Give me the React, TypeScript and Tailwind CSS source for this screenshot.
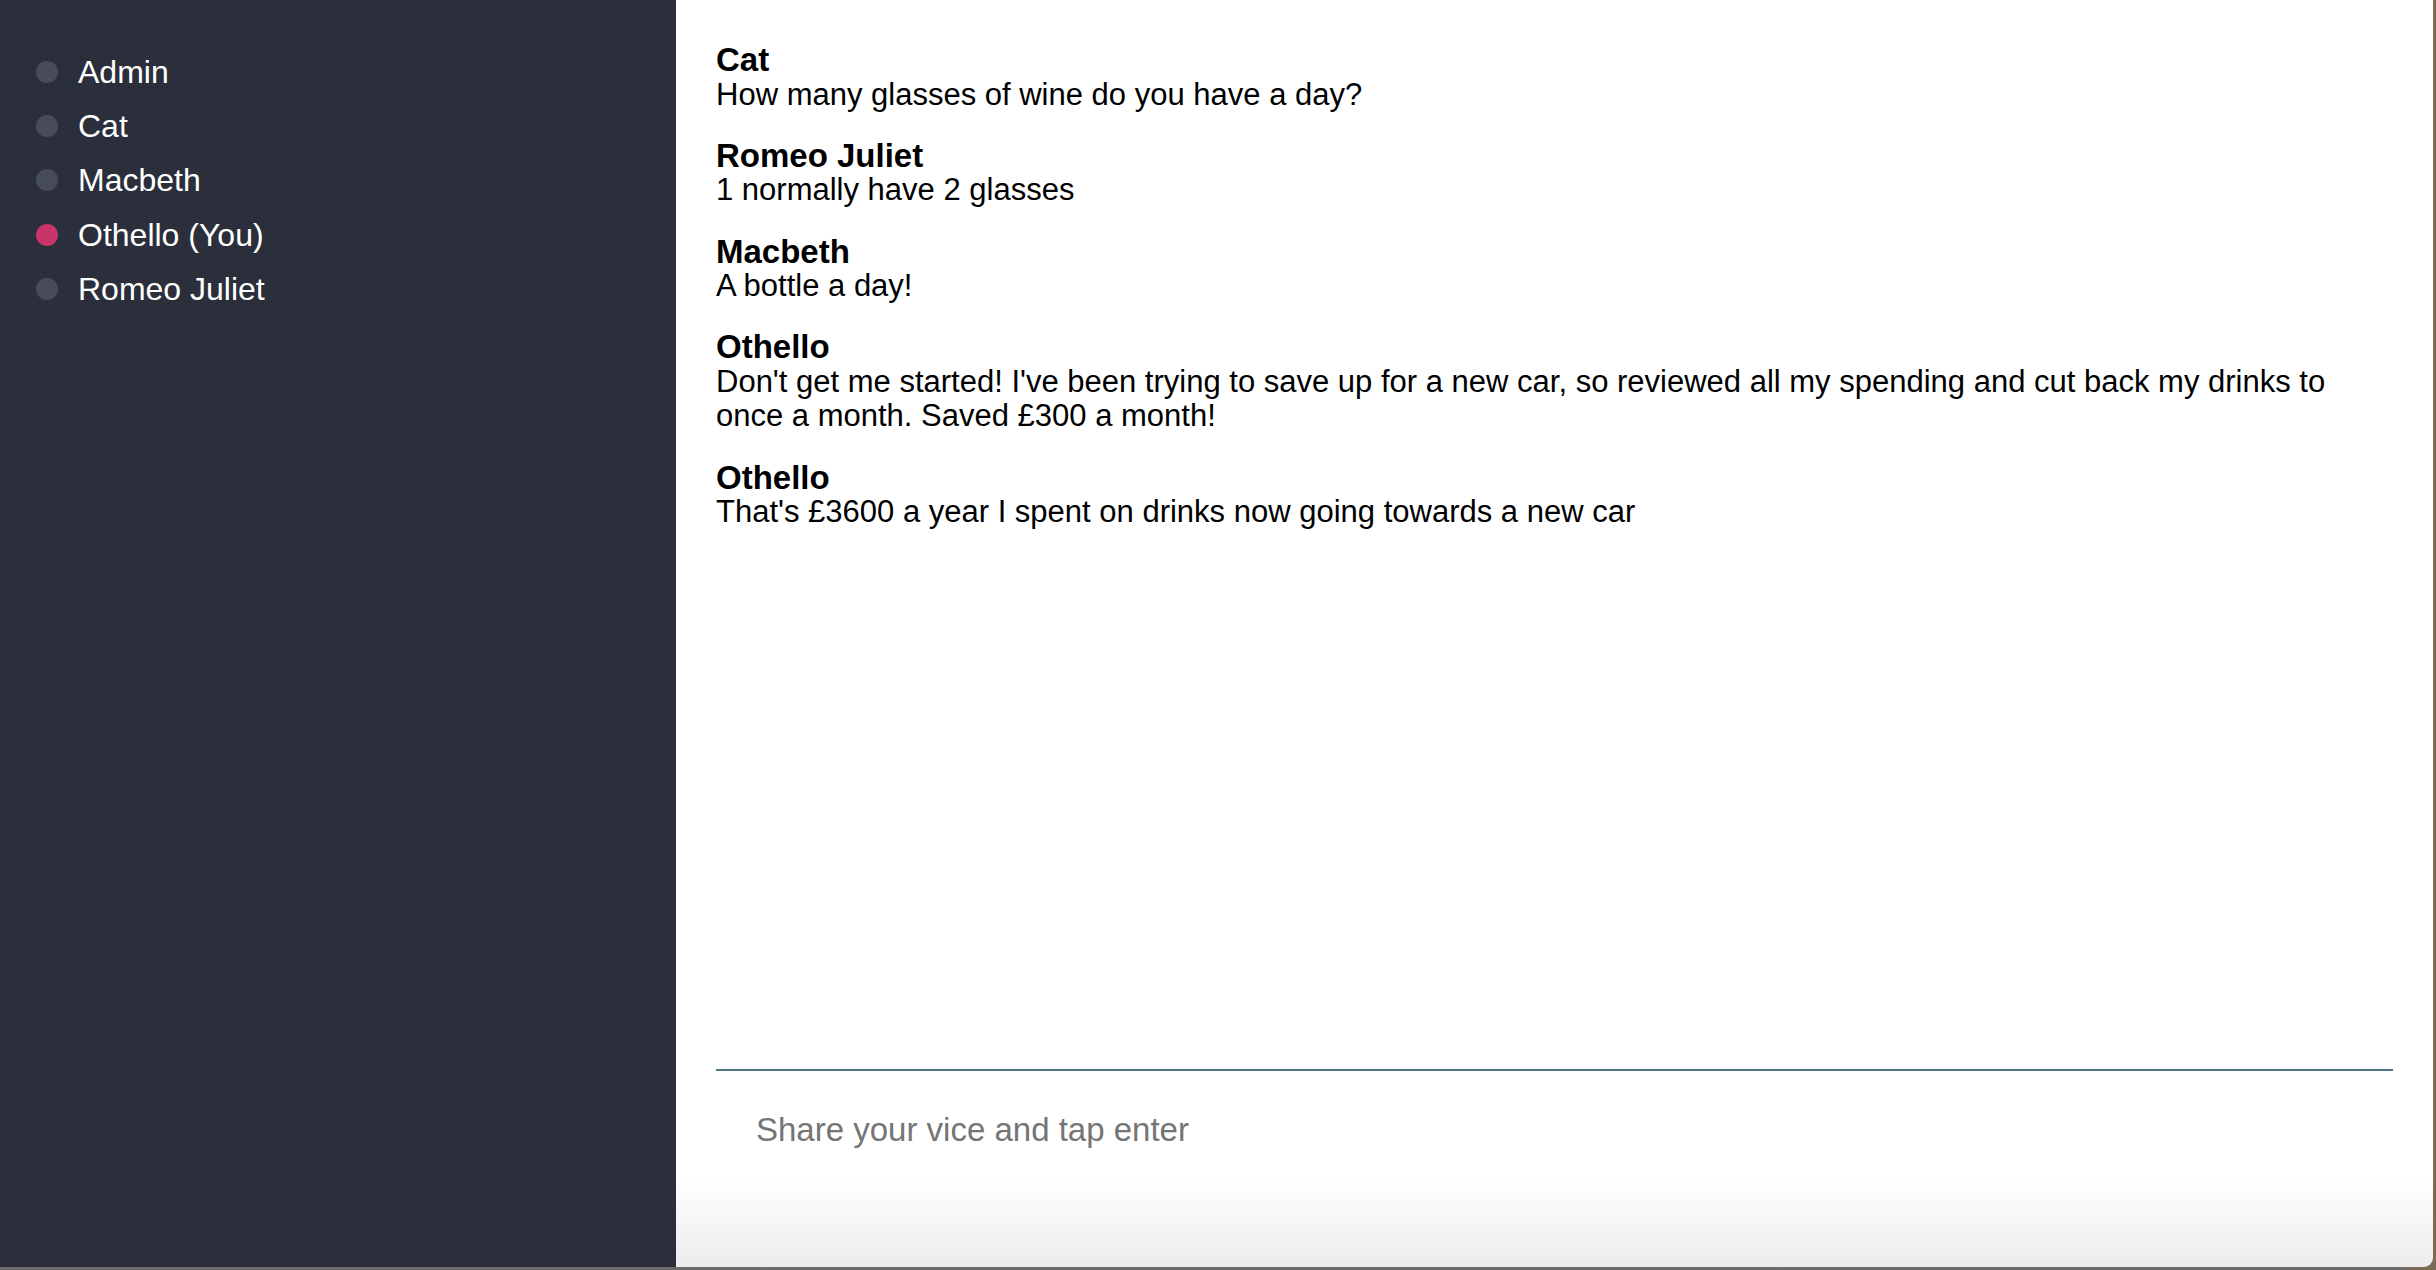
import React from "react";

const users = [
  { name: "Admin", active: false },
  { name: "Cat", active: false },
  { name: "Macbeth", active: false },
  { name: "Othello (You)", active: true },
  { name: "Romeo Juliet", active: false },
];

const messages = [
  { from: "Cat", text: "How many glasses of wine do you have a day?" },
  { from: "Romeo Juliet", text: "1 normally have 2 glasses" },
  { from: "Macbeth", text: "A bottle a day!" },
  {
    from: "Othello",
    text: "Don't get me started! I've been trying to save up for a new car, so reviewed all my spending and cut back my drinks to once a month. Saved £300 a month!",
  },
  { from: "Othello", text: "That's £3600 a year I spent on drinks now going towards a new car" },
];

export default function App() {
  return (
    <div className="w-[2436px] h-[1270px] bg-[#7a6a56] flex flex-col overflow-hidden font-['Liberation_Sans',Arial,sans-serif]">
      <div className="flex h-[1267px] w-[2433px] rounded-br-[9px] overflow-hidden">
        <aside className="w-[676px] shrink-0 bg-[#2b2f3b] pt-[44.5px]">
          <ul className="flex flex-col">
            {users.map((u) => (
              <li key={u.name} className="h-[54.4px] flex items-center pl-[36px] gap-[20px]">
                <span
                  className={
                    u.active
                      ? "w-[22px] h-[22px] rounded-full bg-[#c9346a] shrink-0"
                      : "w-[22px] h-[22px] rounded-full bg-[#474c5d] shrink-0"
                  }
                />
                <span className="text-[32px] leading-[34px] text-white">{u.name}</span>
              </li>
            ))}
          </ul>
        </aside>
        <main className="flex-1 flex flex-col px-[40px] bg-[linear-gradient(to_bottom,#ffffff_93%,#ececec_100%)]">
          <div className="flex-1 pt-[43px] text-black text-[31px] leading-[34.5px]">
            {messages.map((m, i) => (
              <div key={i} className="mb-[26.75px]">
                <div className="font-bold text-[33px] leading-[34.5px]">{m.from}</div>
                <div>{m.text}</div>
              </div>
            ))}
          </div>
          <div className="h-[2px] bg-[#4f7387]" />
          <div className="h-[196px] pt-[40px] pl-[40px]">
            <input
              type="text"
              placeholder="Share your vice and tap enter"
              className="w-full h-[38px] bg-transparent outline-none text-[33px] text-black placeholder:text-[#757575] font-['Liberation_Sans',Arial,sans-serif]"
            />
          </div>
        </main>
      </div>
      <div className="h-[3px] w-[2405px] bg-[#6c6c6c]" />
    </div>
  );
}
